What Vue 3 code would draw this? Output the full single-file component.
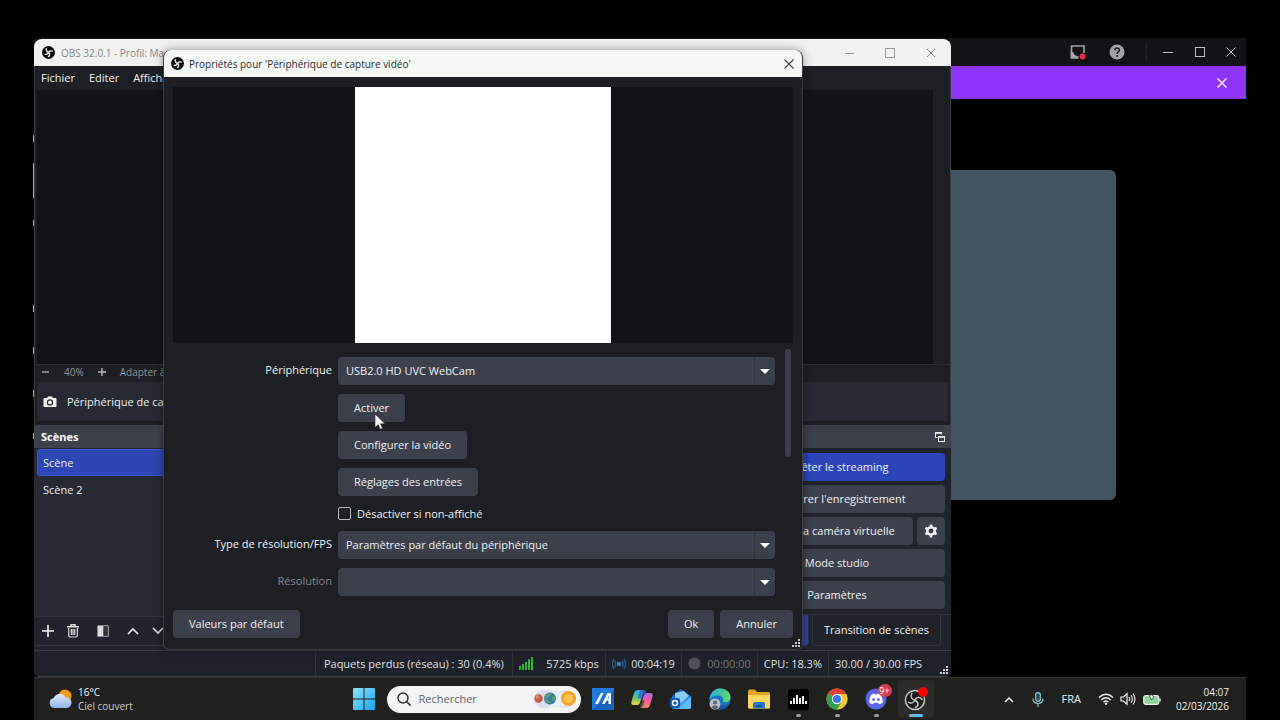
<script setup>
import { ref } from 'vue'

const device = ref('USB2.0 HD UVC WebCam')
const resType = ref('Paramètres par défaut du périphérique')
const disableHidden = ref(false)
const search = ref('')
const menus = ['Fichier', 'Editer', 'Affichage']
</script>

<template>
  <div class="screen">
    <main class="workspace">
      <section class="call-app">
        <header class="call-bar">
          <button class="plain" aria-label="Partage">
            <svg width="18" height="18" viewBox="0 0 18 18"><path d="M2.500 15V3H15v7" fill="none" stroke="#a6a6a8" stroke-width="1.600" /><path d="M1.700 8l2.800 1.500 1 2.500 4 1.500v2.300H1.700z" fill="#a6a6a8" /><circle cx="13.500" cy="13.500" r="3" fill="#e5304e" /></svg>
          </button>
          <button class="plain help" aria-label="Aide">
            <svg width="16" height="16" viewBox="0 0 16 16"><circle cx="8" cy="8" r="7.500" fill="#a3a3a5" /><path d="M5.800 6.300c0-3 4.600-3 4.600-.2 0 1.700-2.300 1.700-2.300 3.600" fill="none" stroke="#19191b" stroke-width="1.500" /><circle cx="8.100" cy="12" r="1" fill="#19191b" /></svg>
          </button>
          <span class="call-sep"></span>
          <button class="plain win" aria-label="Réduire"><svg width="12" height="12" viewBox="0 0 12 12"><path d="M1 6.500h10" stroke="#bbb" /></svg></button>
          <button class="plain win" aria-label="Agrandir"><svg width="12" height="12" viewBox="0 0 12 12"><rect x="1.500" y="1.500" width="9" height="9" fill="none" stroke="#bbb" /></svg></button>
          <button class="plain win" aria-label="Fermer"><svg width="12" height="12" viewBox="0 0 12 12"><path d="M1.500 1.500l9 9M10.500 1.500l-9 9" stroke="#bbb" /></svg></button>
        </header>
        <div class="banner">
          <button class="plain" aria-label="Fermer la bannière"><svg width="12" height="12" viewBox="0 0 12 12"><path d="M1.500 1.500l9 9M10.500 1.500l-9 9" stroke="#f0e4ff" stroke-width="1.600" /></svg></button>
        </div>
        <div class="tile"></div>
      </section>

      <section class="obs">
        <header class="title">
          <svg class="logo" width="13" height="13" viewBox="0 0 24 24"><circle cx="12" cy="12" r="12" fill="#0b0b0d" /><g fill="none" stroke="#e8e8e8" stroke-width="2.600"><path d="M8 4c-1 5 1 7 4.500 8" /><path d="M20 10c-4-2-7-1-8 3" /><path d="M11 20c4-2 4-5 1-8M5 15c3 1 6 0 7-3" /></g></svg>
          <span>OBS 32.0.1 - Profil: Ma</span>
          <div class="title-buttons">
            <button class="plain" aria-label="Réduire"><svg width="12" height="12" viewBox="0 0 12 12"><path d="M2 6.500h9" stroke="#9c9c9c" /></svg></button>
            <button class="plain" aria-label="Agrandir"><svg width="12" height="12" viewBox="0 0 12 12"><rect x="1.500" y="1.500" width="9" height="9" fill="none" stroke="#9c9c9c" /></svg></button>
            <button class="plain" aria-label="Fermer"><svg width="12" height="12" viewBox="0 0 12 12"><path d="M2 2l8 8M10 2l-8 8" stroke="#888" /></svg></button>
          </div>
        </header>
        <nav class="menubar">
          <button v-for="m in menus" :key="m" class="plain">{{ m }}</button>
        </nav>
        <div class="canvas"></div>
        <div class="zoombar">
          <button class="plain" aria-label="Zoom arrière"><svg width="8" height="8" viewBox="0 0 8 8"><path d="M0 4h7" stroke="#aaa" stroke-width="1.400" /></svg></button>
          <span>40%</span>
          <button class="plain" aria-label="Zoom avant"><svg width="8" height="8" viewBox="0 0 8 8"><path d="M0 4h8M4 0v8" stroke="#bbb" stroke-width="1.400" /></svg></button>
          <span>Adapter à la fenêtre</span>
        </div>
        <div class="context">
          <svg width="14" height="14" viewBox="0 0 14 14"><path d="M1.500 3h2.500l1-1.500h4L10 3h2.500q1 0 1 1v7q0 1-1 1h-11q-1 0-1-1V4q0-1 1-1z" fill="#f4f4f4" /><circle cx="7" cy="7.400" r="3.200" fill="#272a33" /><circle cx="7" cy="7.400" r="1.900" fill="#f4f4f4" /></svg>
          <span>Périphérique de capture vidéo</span>
        </div>
        <div class="docks">
          <div class="dock scenes">
            <h2>Scènes</h2>
            <ul>
              <li class="on">Scène</li>
              <li>Scène 2</li>
            </ul>
            <div class="tools">
              <button class="plain" aria-label="Ajouter"><svg width="12" height="12" viewBox="0 0 12 12"><path d="M6 0v12M0 6h12" stroke="#eee" stroke-width="1.700" /></svg></button>
              <button class="plain" aria-label="Supprimer"><svg width="12" height="14" viewBox="0 0 12 14"><path d="M0 2.700h12M4 2V.8h4V2" fill="none" stroke="#ddd" stroke-width="1.500" /><path d="M1.700 4v7.500q0 1.500 1.500 1.500h5.600q1.500 0 1.500-1.500V4M4.400 5v6M6 5v6M7.700 5v6" fill="none" stroke="#ddd" stroke-width="1.200" /></svg></button>
              <button class="plain" aria-label="Filtres"><svg width="12" height="12" viewBox="0 0 12 12"><rect x="0" y="0" width="12" height="12" rx="1.500" fill="#8d8f95" /><rect x="1" y="1" width="5" height="10" fill="#ddd" /><rect x="6.500" y="1.200" width="4.300" height="9.600" fill="#30333c" /></svg></button>
              <button class="plain" aria-label="Monter"><svg width="12" height="8" viewBox="0 0 12 8"><path d="M1 7l5-5 5 5" fill="none" stroke="#eee" stroke-width="1.700" /></svg></button>
              <button class="plain" aria-label="Descendre"><svg width="12" height="8" viewBox="0 0 12 8"><path d="M1 1l5 5 5-5" fill="none" stroke="#ddd" stroke-width="1.700" /></svg></button>
            </div>
          </div>
          <div class="dock controls">
            <h2>
              <button class="plain" aria-label="Détacher"><svg width="10" height="10" viewBox="0 0 10 10"><path d="M3.500 5.500h-3v-5h6v2" fill="none" stroke="#eee" /><path d="M0 1h7" stroke="#eee" stroke-width="1.600" /><rect x="3.500" y="4.500" width="6" height="5" fill="none" stroke="#eee" /><path d="M3 5h7" stroke="#eee" stroke-width="1.600" /></svg></button>
            </h2>
            <div class="control-list">
              <button class="btn blue">Arrêter le streaming</button>
              <button class="btn">Démarrer l'enregistrement</button>
              <div class="pair">
                <button class="btn">Démarrer la caméra virtuelle</button>
                <button class="btn gear" aria-label="Configurer la caméra virtuelle"><svg width="14" height="14" viewBox="0 0 14 14"><circle cx="7" cy="7" r="3.700" fill="none" stroke="#f5f5f5" stroke-width="2.600" /><path d="M7 .5v2M7 11.500v2M1.400 3.800l1.700 1M10.900 9.200l1.700 1M1.400 10.200l1.700-1M10.900 4.800l1.700-1" stroke="#f5f5f5" stroke-width="2.600" /></svg></button>
              </div>
              <button class="btn">Mode studio</button>
              <button class="btn">Paramètres</button>
            </div>
            <div class="tabs">
              <button class="tab current" aria-label="Contrôles"></button>
              <button class="tab">Transition de scènes</button>
            </div>
          </div>
        </div>
        <footer class="status">
          <span class="cell lost">Paquets perdus (réseau) : 30 (0.4%)</span>
          <span class="cell rate">
            <svg width="14" height="13" viewBox="0 0 14 13"><g fill="#2fb52f"><rect x="0" y="9" width="2" height="4" /><rect x="3" y="7" width="2" height="6" /><rect x="6" y="5" width="2" height="8" /><rect x="9" y="2" width="2" height="11" /><rect x="12" y="0" width="2" height="13" /></g></svg>
            5725 kbps
          </span>
          <span class="cell time">
            <svg width="14" height="12" viewBox="0 0 14 12"><circle cx="7" cy="6" r="2.200" fill="#3b82c8" /><path d="M4 2.500q-2 3.500 0 7M10 2.500q2 3.500 0 7M2 .8q-3 5.200 0 10.400M12 .8q3 5.200 0 10.400" fill="none" stroke="#27568f" stroke-width="1.500" /></svg>
            00:04:19
          </span>
          <span class="cell time off">
            <svg width="13" height="13" viewBox="0 0 13 13"><circle cx="6.500" cy="6.500" r="6" fill="#505257" /></svg>
            00:00:00
          </span>
          <span class="cell">CPU: 18.3%</span>
          <span class="cell fps">30.00 / 30.00 FPS</span>
          <svg class="grip" width="8" height="8" viewBox="0 0 8 8"><path d="M6 0h2v2H6zM3 3h2v2H3zM6 3h2v2H6zM0 6h2v2H0zM3 6h2v2H3zM6 6h2v2H6z" fill="#ccc" /></svg>
        </footer>
      </section>

      <section class="dialog" role="dialog" aria-labelledby="dlg-title">
        <header class="dialog-title">
          <svg class="logo" width="13" height="13" viewBox="0 0 24 24"><circle cx="12" cy="12" r="12" fill="#0b0b0d" /><g fill="none" stroke="#e8e8e8" stroke-width="2.600"><path d="M8 4c-1 5 1 7 4.500 8" /><path d="M20 10c-4-2-7-1-8 3" /><path d="M11 20c4-2 4-5 1-8M5 15c3 1 6 0 7-3" /></g></svg>
          <span id="dlg-title">Propriétés pour 'Périphérique de capture vidéo'</span>
          <button class="plain" aria-label="Fermer"><svg width="12" height="12" viewBox="0 0 12 12"><path d="M1.500 1.500l9 9M10.500 1.500l-9 9" stroke="#444" stroke-width="1.100" /></svg></button>
        </header>
        <div class="preview"><div class="feed"></div></div>
        <div class="scroll">
          <form class="form" @submit.prevent>
            <label for="device">Périphérique</label>
            <div class="combo">
              <select id="device" v-model="device"><option>USB2.0 HD UVC WebCam</option></select>
              <span class="arrow"></span>
            </div>
            <button type="button" class="btn">Activer</button>
            <button type="button" class="btn">Configurer la vidéo</button>
            <button type="button" class="btn">Réglages des entrées</button>
            <div class="check">
              <input id="hide" v-model="disableHidden" type="checkbox">
              <label for="hide">Désactiver si non-affiché</label>
            </div>
            <label for="rtype">Type de résolution/FPS</label>
            <div class="combo">
              <select id="rtype" v-model="resType"><option>Paramètres par défaut du périphérique</option></select>
              <span class="arrow"></span>
            </div>
            <label for="res" class="dim">Résolution</label>
            <div class="combo">
              <select id="res" disabled></select>
              <span class="arrow"></span>
            </div>
          </form>
          <div class="track"><div class="thumb"></div></div>
        </div>
        <footer class="actions">
          <button class="btn">Valeurs par défaut</button>
          <button class="btn push">Ok</button>
          <button class="btn">Annuler</button>
        </footer>
        <svg class="grip" width="8" height="8" viewBox="0 0 8 8"><path d="M6 0h2v2H6zM3 3h2v2H3zM6 3h2v2H6zM0 6h2v2H0zM3 6h2v2H3zM6 6h2v2H6z" fill="#ccc" /></svg>
      </section>

      <svg class="cursor" width="12" height="18" viewBox="0 0 12 18"><path d="M1 1v13.500l3.200-3 2 4.700 2.300-1-2-4.400H11z" fill="#fff" stroke="#222" stroke-width=".6" /></svg>
    </main>

    <footer class="taskbar">
      <div class="weather">
        <svg width="24" height="22" viewBox="0 0 24 22"><defs><linearGradient id="cl" x1="0" y1="0" x2="0" y2="1"><stop offset="0" stop-color="#e5edfb" /><stop offset="1" stop-color="#8fb2ea" /></linearGradient></defs><circle cx="16" cy="8" r="6.500" fill="#f39a22" /><path d="M5.500 20a5 5 0 0 1-.8-9.900A6.500 6.500 0 0 1 16.500 9.500a5.300 5.300 0 0 1 1.500 10.500z" fill="url(#cl)" /></svg>
        <div class="wx"><span>16°C</span><span class="wx-sub">Ciel couvert</span></div>
      </div>
      <div class="apps">
        <button class="app" aria-label="Démarrer"><svg width="22" height="22" viewBox="0 0 22 22"><defs><linearGradient id="wn" x1="0" y1="0" x2="1" y2="1"><stop offset="0" stop-color="#8ae4fb" /><stop offset="1" stop-color="#1ba4e8" /></linearGradient></defs><path d="M0 1q0-1 1-1h9.500v10.500H0zM11.500 0H21q1 0 1 1v9.500H11.500zM0 11.500h10.500V22H1q-1 0-1-1zM11.500 11.500H22V21q0 1-1 1h-9.500z" fill="url(#wn)" /></svg></button>
        <label class="search">
          <svg width="14" height="14" viewBox="0 0 14 14"><circle cx="6" cy="6" r="5" fill="none" stroke="#333" stroke-width="1.500" /><path d="M9.500 9.500l4 4" stroke="#333" stroke-width="1.700" /></svg>
          <input v-model="search" type="text" placeholder="Rechercher" aria-label="Rechercher">
          <svg width="46" height="22" viewBox="0 0 46 22"><circle cx="12" cy="11" r="9.500" fill="#dcdcee" /><path d="M19 4l18-1v16l-18-1" fill="#e9edf7" stroke="#cbd3ea" stroke-width=".6" /><circle cx="6.500" cy="10.500" r="4.200" fill="#c05a42" /><circle cx="5.500" cy="9" r="2" fill="#e08a66" /><circle cx="18" cy="10.500" r="6" fill="#3c78b4" /><path d="M13.500 7q3-3 5-1.500t-2 3.500 1 4-2 2q-3.500-3-2-8M20 8l3.500 1v3l-3 1z" fill="#55a267" /><circle cx="36.500" cy="10.500" r="7.600" fill="#f0a52a" /><circle cx="36.500" cy="10.500" r="4.600" fill="#fac64f" /></svg>
        </label>
        <button class="app" aria-label="Application M"><svg width="22" height="22" viewBox="0 0 22 22"><rect width="22" height="22" fill="#2079d8" /><path d="M0 22L22 2v20z" fill="#1862bd" /><path d="M3 16L9 5h2.500L6 16zM10 16l5.500-11h3.500v11h-2.500v-3.500h-2L12.700 16zM15.400 10.500h1.300V7.500z" fill="#fff" /></svg></button>
        <button class="app" aria-label="Copilot"><svg width="22" height="20" viewBox="0 0 22 20"><defs><linearGradient id="c1" x1="0" y1="0" x2="0" y2="1"><stop offset="0" stop-color="#22a9ef" /><stop offset=".5" stop-color="#55c878" /><stop offset="1" stop-color="#f5cb3a" /></linearGradient><linearGradient id="c2" x1="0" y1="0" x2="0" y2="1"><stop offset="0" stop-color="#a76be8" /><stop offset=".5" stop-color="#ee5b9c" /><stop offset="1" stop-color="#fa8a50" /></linearGradient></defs><path d="M6 1h7l-4 13q-.7 2-3 2H3q-3.500 0-2.500-3.500L3 4q1-3 3-3z" fill="url(#c1)" /><path d="M16 19H9l4-13q.7-2 3-2h3q3.500 0 2.500 3.500L19 16q-1 3-3 3z" fill="url(#c2)" /><path d="M9 1h4.500q1.500 0 2 3-2.500 0-3.200 2l-1 3.500H6.500z" fill="#2b62d8" opacity=".75" /><path d="M10 11L8 19h1.500q2 0 2.800-3l1.200-4z" fill="#20242c" opacity=".6" /></svg></button>
        <button class="app" aria-label="Courrier"><svg width="22" height="22" viewBox="0 0 22 22"><path d="M2 8l9-7 10 7v11q0 2-2 2H4q-2 0-2-2z" fill="#1765bf" /><path d="M5 5l9-2 5 5-8 7-6-4z" fill="#8ccdf8" /><path d="M2 9l9 6 10-7v11q0 2-2 2H4q-2 0-2-2z" fill="#3aa2f2" /><path d="M21 9v10q0 2-2 2H8z" fill="#79c7fb" opacity=".6" /><rect x="0" y="10" width="10" height="10" rx="2" fill="#0c57b4" /><circle cx="5" cy="15" r="2.500" fill="none" stroke="#fff" stroke-width="1.500" /></svg></button>
        <button class="app" aria-label="Edge"><svg width="22" height="22" viewBox="0 0 22 22"><defs><linearGradient id="eg" x1="0" y1="0" x2="1" y2="0"><stop offset="0" stop-color="#2ba8e8" /><stop offset="1" stop-color="#5ddb62" /></linearGradient></defs><circle cx="11" cy="11" r="10.500" fill="#1672c4" /><path d="M.6 10C2 3 7 .5 11 .5c7 0 11 5 10.500 9.500-.4 4-5 5-8 3.500 2-3-1-6-4.500-6S2 9 .6 12z" fill="url(#eg)" /><path d="M9 10q-1 6 5 7 3 .4 6-1.500-3 6-9 6-5-1-5-6 0-4 3-5.500z" fill="#1b57a6" /><circle cx="6" cy="16" r="5.500" fill="#b9bfc4" /><circle cx="6" cy="14.500" r="2" fill="#5a6066" /><path d="M2.500 19.500q3.500-4.500 7 0-3.500 3-7 0z" fill="#5a6066" /></svg></button>
        <button class="app" aria-label="Explorateur"><svg width="22" height="20" viewBox="0 0 22 20"><path d="M0 2q0-1.500 1.500-1.500H7l2 2.500h11.500Q22 3 22 4.500V18q0 1.500-1.500 1.500h-19Q0 19.500 0 18z" fill="#e2a420" /><path d="M0 6h22v12q0 1.500-1.500 1.500h-19Q0 19.500 0 18z" fill="#fbd75e" /><path d="M5 19.500V15q0-2 2-2h8q2 0 2 2v4.500z" fill="#2a77c6" /><rect x="8" y="16" width="6" height="2" rx="1" fill="#174f92" /></svg></button>
        <button class="app run" aria-label="Audio"><svg width="21" height="21" viewBox="0 0 21 21"><rect width="21" height="21" rx="3" fill="#000" /><path d="M3 12v3M6 9v6M9 6v9M12 9v6M15 7v8M18 12v3" stroke="#fff" stroke-width="1.900" /></svg></button>
        <button class="app run" aria-label="Chrome"><svg width="22" height="22" viewBox="0 0 22 22"><circle cx="11" cy="11" r="10.500" fill="#f6c631" /><path d="M11 11L1.900 5.700A10.500 10.500 0 0 1 20.100 5.700z" fill="#df4235" /><path d="M11 11L1.900 5.700A10.500 10.500 0 0 0 11 21.500l5-8z" fill="#2f9f50" /><path d="M11 6h9.200a10.500 10.500 0 0 1-9.200 15.500l5-8z" fill="#f6c631" /><circle cx="11" cy="11" r="5.200" fill="#fff" /><circle cx="11" cy="11" r="4.100" fill="#3b7de8" /></svg></button>
        <button class="app run" aria-label="Discord"><svg width="22" height="22" viewBox="0 0 22 22"><circle cx="11" cy="11" r="10.500" fill="#5865e8" /><path d="M6 7q2-1.500 3.500-1.500l.5 1h2l.5-1Q14 5.500 16 7q2 4 1.800 7.500-2 1.700-3.800 1.800l-1-1.500H9l-1 1.500q-1.800-.1-3.800-1.800Q4 11 6 7z" fill="#fff" /><ellipse cx="8.600" cy="11.500" rx="1.400" ry="1.600" fill="#5865e8" /><ellipse cx="13.400" cy="11.500" rx="1.400" ry="1.600" fill="#5865e8" /></svg><span class="badge">9+</span></button>
        <button class="app active" aria-label="OBS Studio"><svg width="24" height="24" viewBox="0 0 24 24"><circle cx="11" cy="13" r="9.600" fill="#1b1b1d" stroke="#c9c9c9" stroke-width="1.500" /><g fill="none" stroke="#c4c4c4" stroke-width="1.500"><path d="M8 6c-2 4 0 7 3 7" /><path d="M18.500 13c-3-4-6-3-7.500 0" /><path d="M11 20.500c4-1 4-5 0-7.500" /><path d="M4 15c3 2 6 1 7-2" /></g><circle cx="19" cy="5" r="5" fill="#f30505" /></svg></button>
      </div>
      <div class="tray">
        <svg width="10" height="7" viewBox="0 0 10 7"><path d="M1 6l4-4 4 4" fill="none" stroke="#eee" stroke-width="1.500" /></svg>
        <svg class="mic" width="12" height="15" viewBox="0 0 12 15"><rect x="3.700" y=".7" width="4.600" height="8.600" rx="2.300" fill="#1f4a56" stroke="#8fc4d2" stroke-width="1.200" /><path d="M1 6.500q0 5 5 5t5-5M6 11.500V15" fill="none" stroke="#8fc4d2" stroke-width="1.200" /></svg>
        <span class="lang">FRA</span>
        <svg width="16" height="12" viewBox="0 0 16 12"><path d="M1 4.500q7-6.500 14 0M3.300 6.900q4.700-4.300 9.400 0M5.500 9.200q2.500-2.200 5 0" fill="none" stroke="#f2f2f2" stroke-width="1.400" /><circle cx="8" cy="10.700" r="1.200" fill="#f2f2f2" /></svg>
        <svg class="vol" width="16" height="14" viewBox="0 0 16 14"><path d="M1 5h2.500L7 1.700v10.600L3.500 9H1z" fill="none" stroke="#f2f2f2" stroke-width="1.200" /><path d="M9 5q1.300 2 0 4M11 3.200q2.700 3.800 0 7.600M13 1.500q4 5.500 0 11" fill="none" stroke="#f2f2f2" stroke-width="1.100" /></svg>
        <svg class="bat" width="18" height="14" viewBox="0 0 18 14"><rect x=".7" y="3.700" width="15" height="8.600" rx="2" fill="#8ed49a" stroke="#e4f5e6" stroke-width="1.200" /><path d="M17 6.500v3" stroke="#e4f5e6" stroke-width="1.500" /><path d="M8.500 0v3H6l2.500 5L11 4.500 9.500 4z" fill="#fff" stroke="#222" stroke-width=".7" /></svg>
        <div class="clock"><span>04:07</span><span>02/03/2026</span></div>
      </div>
    </footer>
  </div>
</template>

<style>
body { background: #000; }
</style>

<style scoped>
* { box-sizing: border-box; }
.screen {
  display: flex; flex-direction: column;
  min-height: 100vh; padding: 38px 34px 0;
  background: #000; color: #f0f1f3;
  font: 11px/16px "Open Sans", "Noto Sans", sans-serif;
}
button, input, select { font: inherit; color: inherit; margin: 0; }
.plain { display: inline-flex; align-items: center; padding: 0; border: 0; background: none; }
svg { flex: none; display: block; }
.workspace { position: relative; flex: 1; min-height: 639px; }
/* sliver of the page showing past the left window edge */
.workspace::before {
  content: ""; position: absolute; left: -1px; top: 97px; width: 1px; height: 304px;
  background: linear-gradient(#aaa 7px, #0000 7px 28px, #aaa 28px 63px, #0000 63px 85px, #aaa 85px 91px, #0000 91px 170px, #aaa 170px 177px, #0000 177px 212px, #aaa 212px 219px, #0000 219px 255px, #aaa 255px 262px, #0000 262px 298px, #aaa 298px);
}

.call-bar { display: flex; align-items: center; justify-content: flex-end; height: 28px; background: #131315; }
.help { margin-left: 22px; }
.call-sep { width: 1px; height: 18px; margin: 0 5px 0 21px; background: #202022; }
.win { justify-content: center; width: 32px; }
.win:last-child { width: 30px; }
.banner { display: flex; justify-content: flex-end; align-items: center; height: 33px; padding-right: 18px; background: #8d34f8; }
.tile { width: 500px; height: 330px; margin: 71px 130px 0 auto; border-radius: 6px; background: #425362; }

.obs {
  position: absolute; left: 0; top: 1px; width: 917px; height: 638px;
  display: flex; flex-direction: column;
  border-radius: 8px 8px 6px 6px; overflow: hidden;
  background: #1d1f24; box-shadow: inset 0 0 0 1px #3a3c42;
}
.title { display: flex; align-items: center; height: 27px; padding: 0 13px 0 8px; gap: 6px; background: #f1f1f1; color: #8a8a8a; font-size: 10px; }
.title-buttons { display: flex; gap: 28px; margin-left: auto; }
.title-buttons .plain { width: 13px; }
.menubar { display: flex; gap: 14px; height: 24px; padding-left: 7px; }
.canvas { height: 274px; margin: 0 18px 0 3px; background: #121317; }
.zoombar { display: flex; align-items: center; height: 15px; padding-left: 8px; color: #92949a; font-size: 10px; gap: 14px; border-top: 1px solid #2b2d33; }
.context { display: flex; align-items: center; gap: 10px; height: 39px; margin: 3px 3px 4px; padding-left: 6px; background: #272a33; }
.docks { display: flex; justify-content: space-between; flex: 1; background: #22242d; }
.dock { display: flex; flex-direction: column; }
.scenes { width: 300px; padding-bottom: 4px; }
.controls { width: 228px; }
h2 { display: flex; align-items: center; height: 23px; margin: 0; padding: 0 6px; background: #3c404b; font-size: 11px; color: #fff; }
.scenes h2 { padding-left: 7px; }
.controls h2 .plain { margin-left: auto; }
ul { list-style: none; flex: 1; margin: 1px 0 0; padding: 0 3px; background: #272a33; }
li { height: 27px; padding-left: 6px; line-height: 27px; border-radius: 4px; }
li.on { background: #2b47b6; box-shadow: inset 0 0 0 1px #3c59c9; }
.tools { display: flex; align-items: center; height: 30px; padding-left: 8px; gap: 13px; border-top: 1px solid #343740; border-bottom: 1px solid #343740; }
.tools .plain:nth-child(3) { margin: 0 5px; }
.control-list { display: flex; flex-direction: column; gap: 4px; padding: 5px 6px; }
.pair { display: flex; gap: 4px; }
.btn { height: 28px; padding: 0 16px; border: 0; border-radius: 4px; background: #3c404d; color: #f0f1f3; white-space: nowrap; }
.pair .btn:first-child { flex: 1; min-width: 0; padding: 0 4px; }
.btn.blue { background: #2945b8; }
.btn.gear { display: flex; align-items: center; padding: 0 7px; }
.tabs { display: flex; justify-content: flex-end; flex: 1; padding-right: 10px; gap: 3px; border-top: 1px solid #32353e; }
.tab { height: 31px; padding: 0 11px; border: 1px solid #30333c; border-top: 0; border-radius: 0 0 4px 4px; background: #20222a; white-space: nowrap; }
.tab.current { width: 80px; background: #2945b8; }
.status { position: relative; display: flex; justify-content: flex-end; height: 27px; background: #20222b; border-top: 1px solid #3a3c42; border-bottom: 1px solid #3a3c42; color: #dfe0e3; }
.cell { display: flex; align-items: center; justify-content: space-between; padding: 0 6px; border-left: 1px solid #30323a; white-space: nowrap; gap: 5px; }
.lost { padding: 0 8px; }
.rate { width: 93px; }
.time { width: 76px; }
.off { color: #74767c; }
.fps { width: 123px; }
.grip { position: absolute; right: 3px; bottom: 2px; }

.dialog {
  position: absolute; left: 129px; top: 12px; width: 640px; height: 600px;
  display: flex; flex-direction: column;
  border: 1px solid #3b3d42; border-top: 0; border-radius: 8px 8px 6px 6px; overflow: hidden;
  background: #1d1f24; box-shadow: 0 0 10px rgba(0, 0, 0, .4);
}
.dialog-title { display: flex; align-items: center; height: 27px; padding: 0 7px; gap: 5px; background: #f5f9f5; color: #2a2a2a; font-size: 10px; }
.dialog-title .plain { margin-left: auto; }
.preview { display: flex; justify-content: center; height: 256px; margin: 10px 9px 0; background: #121317; }
.feed { width: 256px; background: #fff; }
.scroll { display: flex; justify-content: space-between; height: 254px; margin-top: 6px; padding-right: 11px; overflow: hidden; }
.form { flex: 1; display: grid; grid-template-columns: 168px 1fr; column-gap: 6px; row-gap: 9px; align-content: start; padding: 8px 10px 0 0; }
.form > label { text-align: right; line-height: 26px; height: 28px; }
.form > .btn, .check { grid-column: 2; justify-self: start; }
.form > .dim { color: #85878c; }
.combo { position: relative; height: 28px; }
select { appearance: none; display: block; width: 100%; height: 28px; padding: 0 30px 0 8px; border: 0; border-radius: 4px; background: #3c404d; color: #f0f1f3; opacity: 1; }
.arrow { position: absolute; right: 0; top: 0; display: flex; align-items: center; justify-content: center; width: 21px; height: 28px; border-left: 1px solid #31343e; pointer-events: none; }
.arrow::after { content: ""; border: 5px solid transparent; border-top-color: #fff; border-bottom: 0; }
.check { display: flex; align-items: center; gap: 6px; height: 17px; }
.check input { appearance: none; width: 13px; height: 13px; border: 1px solid #b9bac0; border-radius: 2px; }
.track { width: 6px; }
.thumb { height: 108px; border-radius: 3px; background: #3c404b; }
.actions { display: flex; align-items: center; gap: 6px; padding: 7px 9px 0; }
.push { margin-left: auto; }
.dialog .grip { right: 2px; bottom: 2px; }
.cursor { position: absolute; left: 340px; top: 375px; }

.taskbar { display: flex; align-items: center; height: 43px; background: #20211f; border-top: 1px solid #343533; color: #f1f1f1; }
.weather, .tray { flex: 1 1 0; display: flex; align-items: center; }
.weather { padding-left: 15px; gap: 5px; }
.wx, .clock { display: flex; flex-direction: column; line-height: 14px; font-size: 10px; }
.wx-sub { color: #cbcbcb; }
.apps { display: flex; align-items: center; }
.app { position: relative; display: flex; align-items: center; justify-content: center; width: 39px; height: 38px; padding: 0; border: 0; border-radius: 4px; background: none; }
.run::after, .active::after { content: ""; position: absolute; bottom: 1px; left: 17px; width: 5px; height: 3px; border-radius: 2px; background: #999; }
.active { background: #2b2c2a; width: 36px; margin-left: 2px; }
.active::after { left: 11px; width: 14px; background: #63bce8; }
.badge { position: absolute; right: 4px; top: 4px; width: 14px; height: 13px; border-radius: 7px; background: #d43d52; color: #fff; font-size: 9px; line-height: 13px; text-align: center; }
.search { display: flex; align-items: center; width: 194px; height: 27px; margin: 0 3px; padding: 0 3px 0 10px; gap: 8px; border-radius: 14px; background: #f3f3f3; color: #333; }
.search input { flex: 1; min-width: 0; padding: 0; border: 0; outline: 0; background: none; }
.search input::placeholder { color: #666; opacity: 1; }
.tray { justify-content: flex-end; padding-right: 17px; }
.mic { margin-left: 18px; }
.lang { margin: 0 17px 0 18px; font-size: 11px; }
.vol { margin-left: 6px; }
.bat { margin: 0 15px 0 7px; }
.clock { text-align: right; }
</style>
